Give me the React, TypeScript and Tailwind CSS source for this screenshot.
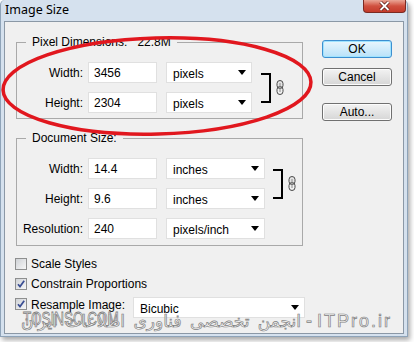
import React from "react";

const Arrow = () => (
  <svg width="8" height="5" viewBox="0 0 8 5">
    <path d="M0 0H8L4 5Z" fill="#000" />
  </svg>
);

const Chain = () => (
  <svg width="8" height="15" viewBox="0 0 8 15">
    <rect x="1" y="0.5" width="6" height="8" rx="3" fill="#e4e4e4" stroke="#4a4a4a" strokeWidth="1" />
    <rect x="1" y="6.5" width="6" height="8" rx="3" fill="none" stroke="#4a4a4a" strokeWidth="1" />
    <line x1="4" y1="3" x2="4" y2="12" stroke="#8a8a8a" strokeWidth="1" />
  </svg>
);

function Field({ value }: { value: string }) {
  return (
    <div className="ml-[5px] flex h-[21px] w-[69px] items-center border border-[#e0e0e0] bg-white pl-[5px]">
      {value}
    </div>
  );
}

function Select({ text, cls }: { text: string; cls: string }) {
  return (
    <div className={cls + " flex h-[21px] items-center justify-between border border-[#e0e0e0] bg-white pl-[6px] pr-[5px]"}>
      <span className="pt-[2px]">{text}</span>
      <Arrow />
    </div>
  );
}

function Row({ label, value, sel, selCls }: { label: string; value: string; sel: string; selCls: string }) {
  return (
    <div className="flex h-[21px] items-center">
      <span className="w-[66px] text-right">{label}</span>
      <Field value={value} />
      <Select text={sel} cls={selCls} />
    </div>
  );
}

function Bracket() {
  return (
    <div className="flex items-center">
      <div className="h-[30px] w-[10px] border-t-2 border-r-2 border-b-2 border-black" />
      <div className="ml-[5px]">
        <Chain />
      </div>
    </div>
  );
}

function Check({ checked }: { checked: boolean }) {
  return (
    <div className="flex h-[12px] w-[12px] shrink-0 items-center justify-center border border-[#8e8f8f] bg-linear-to-br from-[#cfd2d6] to-[#f7f7f7]">
      {checked && (
        <svg width="10" height="10" viewBox="0 0 10 10">
          <path d="M2 5.2L4 7.6L8.2 1.8" fill="none" stroke="#3a4e93" strokeWidth="1.7" />
        </svg>
      )}
    </div>
  );
}

function Button({ label, primary }: { label: string; primary?: boolean }) {
  return (
    <div
      className={
        primary
          ? "flex h-[18px] w-[70px] items-center justify-center rounded-[3px] border border-[#3c8fd0] bg-linear-to-b from-[#e8f6fd] to-[#b9e2f9] shadow-[inset_0_0_0_1px_#9fe3ff]"
          : "flex h-[18px] w-[70px] items-center justify-center rounded-[3px] border border-[#707070] bg-linear-to-b from-[#f3f3f3] to-[#d6d6d6] shadow-[inset_0_0_0_1px_#fcfcfc]"
      }
    >
      {label}
    </div>
  );
}

export default function App() {
  return (
    <div className="relative h-[342px] w-[414px] overflow-hidden bg-white font-['Liberation_Sans',Arial,sans-serif] text-[12px] leading-[14px] text-black">
      <div className="flex h-[337px] w-[408px] flex-col rounded-t-[5px] border-l border-r border-b border-[#8ea3b8] bg-[#d5e1ee] px-[3px] shadow-[2px_3px_5px_rgba(0,0,0,0.35)]">
        {/* title bar */}
        <div className="flex h-[21px] items-start justify-between">
          <span className="mt-[3px] pl-[1px] text-[12.5px] font-['Noto_Sans',sans-serif] leading-[14px]">Image Size</span>
          <div className="mr-[-2px] flex h-[13px] w-[43px] items-center justify-center rounded-b-[4px] border border-t-0 border-[#7b2a22] bg-linear-to-b from-[#e9a596] via-[#d0503f] to-[#c43b2b]">
            <svg width="13" height="10" viewBox="0 0 13 10">
              <path d="M2.5 1L10.5 9M10.5 1L2.5 9" stroke="#5a1a14" strokeWidth="3.4" />
              <path d="M2.5 1L10.5 9M10.5 1L2.5 9" stroke="#fff" strokeWidth="1.8" />
            </svg>
          </div>
        </div>
        {/* content */}
        <div className="flex h-[313px] border border-[#8b98a6] bg-[#f0f0f0]">
          <div className="flex w-[300px] flex-col pl-[10px] pt-[13px]">
            <fieldset className="ml-[1px] w-[287px] border border-[#a9a9a9] pt-[13px] pb-[5px]">
              <legend className="ml-[9px] px-[6px] leading-[14px]">
                Pixel Dimensions:<span className="ml-[10px]">22.8M</span>
              </legend>
              <div className="flex items-center">
                <div className="flex flex-col gap-[9px]">
                  <Row label="Width:" value="3456" sel="pixels" selCls="ml-[9px] w-[86px]" />
                  <Row label="Height:" value="2304" sel="pixels" selCls="ml-[9px] w-[86px]" />
                </div>
                <div className="ml-[9px]">
                  <Bracket />
                </div>
              </div>
            </fieldset>
            <fieldset className="ml-[1px] mt-[12px] w-[287px] border border-[#a9a9a9] pt-[13px] pb-[6px]">
              <legend className="ml-[9px] px-[6px] leading-[14px]">Document Size:</legend>
              <div className="flex items-center">
                <div className="flex flex-col gap-[9px]">
                  <Row label="Width:" value="14.4" sel="inches" selCls="ml-[9px] w-[99px]" />
                  <Row label="Height:" value="9.6" sel="inches" selCls="ml-[9px] w-[99px]" />
                </div>
                <div className="ml-[8px]">
                  <Bracket />
                </div>
              </div>
              <div className="mt-[9px]">
                <Row label="Resolution:" value="240" sel="pixels/inch" selCls="ml-[9px] w-[99px]" />
              </div>
            </fieldset>
            <div className="mt-[8px] flex h-[20px] items-center">
              <Check checked={false} />
              <span className="ml-[4px]">Scale Styles</span>
            </div>
            <div className="flex h-[20px] items-center">
              <Check checked={true} />
              <span className="ml-[4px]">Constrain Proportions</span>
            </div>
            <div className="flex items-start pt-[3px]">
              <div className="mt-[1px]">
                <Check checked={true} />
              </div>
              <span className="ml-[4px] mt-[1px] w-[102px] shrink-0">Resample Image:</span>
              <Select text="Bicubic" cls="w-[172px] shrink-0" />
            </div>
          </div>
          <div className="ml-auto mr-[11px] flex flex-col pt-[18px]">
            <Button label="OK" primary />
            <div className="mt-[10px]">
              <Button label="Cancel" />
            </div>
            <div className="mt-[17px]">
              <Button label="Auto..." />
            </div>
          </div>
        </div>
      </div>

      {/* red ellipse annotation */}
      <svg className="pointer-events-none absolute left-0 top-0" width="414" height="342" viewBox="0 0 414 342">
        <ellipse cx="157" cy="86" rx="154" ry="48" transform="rotate(-1.5 157 86)" fill="none" stroke="#e1171e" strokeWidth="3.5" />
      </svg>

      {/* watermark */}
      <div className="pointer-events-none absolute left-[23px] top-[309px] origin-left scale-x-75 text-[18px] leading-[20px] text-[#fafafa] [-webkit-text-stroke:0.8px_#7c7c7c] font-['Liberation_Sans',sans-serif]">
        TOSINSO.COM
      </div>
      <div
        dir="ltr"
        className="pointer-events-none absolute right-[22px] top-[310px] whitespace-nowrap text-[17px] leading-[22px] text-[#fafafa] [-webkit-text-stroke:0.7px_#808080] font-['DejaVu_Sans',sans-serif]"
      >
        <span className="[word-spacing:3px]">انجمن تخصصی فناوری اطلاعات ایران</span>
        <span className="tracking-[2px] font-['Liberation_Sans',sans-serif] text-[18px]"> - ITPro.ir</span>
      </div>
    </div>
  );
}
